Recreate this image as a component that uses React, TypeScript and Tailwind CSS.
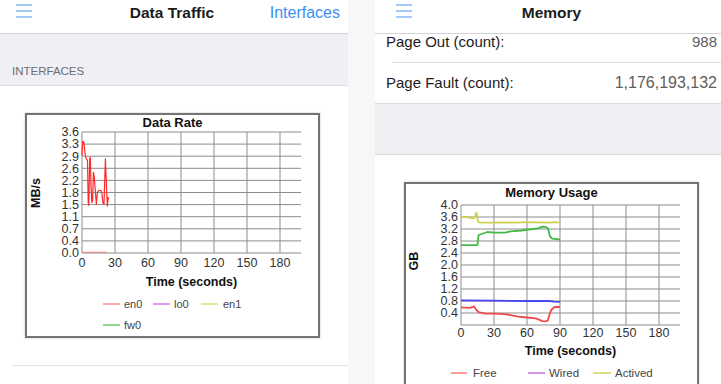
type Pt = [number, number];

const FONT = '"Liberation Sans", Arial, sans-serif';

// t seconds -> x, value -> y
function line(data: Pt[], x0: number, y0: number, ys: number) {
  return data.map(([t, v]) => `${(x0 + t * 1.1).toFixed(1)},${(y0 - v * ys).toFixed(1)}`).join(' ');
}

const en0: Pt[] = [
  [0, 2.9], [0.6, 3.32], [1.6, 3.3], [3, 2.9], [4, 2.8], [5, 2.75], [5.6, 1.5], [6.2, 1.42],
  [7, 2.8], [7.5, 2.85], [8.2, 2.0], [9, 1.5], [9.6, 1.55], [10.4, 2.4], [11, 2.3], [12, 1.9],
  [13, 1.45], [14, 1.8], [15, 1.86], [17, 1.86], [18, 1.8], [19, 1.5], [20, 1.45], [21.3, 2.8],
  [22, 2.2], [23, 1.4], [23.8, 1.65], [24.4, 1.6],
];

const actived: Pt[] = [
  [0, 3.6], [5, 3.6], [8, 3.58], [10, 3.55], [12, 3.57], [14, 3.75], [15, 3.55], [16, 3.42],
  [20, 3.41], [30, 3.41], [40, 3.42], [50, 3.41], [60, 3.43], [70, 3.42], [80, 3.41], [85, 3.43], [90, 3.41],
];
const green: Pt[] = [
  [0, 2.66], [14, 2.66], [15, 2.67], [16, 3.0], [20, 3.05], [24, 3.1], [30, 3.08], [40, 3.08],
  [45, 3.12], [55, 3.15], [65, 3.2], [70, 3.22], [74, 3.28], [77, 3.27], [79, 3.22], [81, 2.95],
  [83, 2.88], [90, 2.85],
];
const wired: Pt[] = [[0, 0.82], [30, 0.81], [60, 0.8], [80, 0.8], [85, 0.78], [90, 0.77]];
const free: Pt[] = [
  [0, 0.59], [8, 0.57], [12, 0.62], [14, 0.5], [16, 0.43], [22, 0.38], [30, 0.38], [40, 0.36],
  [45, 0.33], [52, 0.28], [60, 0.25], [68, 0.22], [72, 0.16], [74, 0.13], [77, 0.12], [79, 0.15],
  [80, 0.3], [82, 0.5], [85, 0.6], [90, 0.6],
];

const xTicks = [0, 30, 60, 90, 120, 150, 180];

function Hamburger() {
  return (
    <svg width="16" height="14" viewBox="0 0 16 14" className="mt-[4px]">
      <g stroke="#74b0f4" strokeWidth="1.3">
        <line x1="0" y1="1" x2="16" y2="1" />
        <line x1="0" y1="7" x2="16" y2="7" />
        <line x1="0" y1="13" x2="16" y2="13" />
      </g>
    </svg>
  );
}

function DataRateChart() {
  const top = 132;
  const step = 12.1;
  const labels = ['3.6', '3.3', '2.9', '2.6', '2.2', '1.8', '1.5', '1.1', '0.7', '0.4', '0.0'];
  return (
    <div className="ml-[25px] mt-[27px] w-[295px] h-[225px] border-2 border-[#737373] shadow-[0_0_2px_rgba(0,0,0,0.25)]">
      <svg width="291" height="221" viewBox="27 115 291 221" fontFamily={FONT}>
        <g stroke="#8c8c8c" strokeWidth="1">
          {labels.map((_, i) => (
            <line key={i} x1="82" x2="301" y1={top + i * step} y2={top + i * step} />
          ))}
          {xTicks.map((t, i) => (
            <line key={t} x1={82 + i * 33} x2={82 + i * 33} y1={top} y2={253} />
          ))}
        </g>
        <g fontSize="12" fill="#333" textAnchor="end">
          {labels.map((l, i) => (
            <text key={l} x="79" y={top + i * step + 4.3} textLength="17.5" lengthAdjust="spacingAndGlyphs">{l}</text>
          ))}
        </g>
        <g fontSize="12.5" fill="#333" textAnchor="middle">
          {xTicks.map((t, i) => (
            <text key={t} x={82 + i * 33} y="267">{t}</text>
          ))}
        </g>
        <text x="172.5" y="127" fontSize="13" fontWeight="bold" textAnchor="middle" fill="#111">Data Rate</text>
        <text x="191.5" y="286" fontSize="12.5" fontWeight="bold" textAnchor="middle" fill="#111">Time (seconds)</text>
        <text transform="translate(39.5,193) rotate(-90)" fontSize="12.5" fontWeight="bold" textAnchor="middle" fill="#111">MB/s</text>
        <line x1="82" x2="107" y1="252.3" y2="252.3" stroke="#f08080" strokeWidth="1" />
        <polyline points={line(en0, 82, 253, 33.6)} fill="none" stroke="#ff2a2a" strokeWidth="1.2" strokeLinejoin="round" />
        <g fontSize="11" fill="#444">
          <line x1="103" x2="120" y1="304" y2="304" stroke="#ff8a8a" strokeWidth="1.5" />
          <text x="124" y="308">en0</text>
          <line x1="153" x2="170" y1="304" y2="304" stroke="#d77be0" strokeWidth="1.5" />
          <text x="174" y="308">lo0</text>
          <line x1="201" x2="218" y1="304" y2="304" stroke="#dede70" strokeWidth="1.5" />
          <text x="223" y="308">en1</text>
          <line x1="103" x2="120" y1="325" y2="325" stroke="#6cc86c" strokeWidth="1.5" />
          <text x="124" y="329">fw0</text>
        </g>
      </svg>
    </div>
  );
}

function MemoryChart() {
  const top = 204;
  const step = 12;
  const labels = ['4.0', '3.6', '3.2', '2.8', '2.4', '2.0', '1.6', '1.2', '0.8', '0.4'];
  return (
    <div className="ml-[29px] mt-[27px] w-[295px] h-[215px] shrink-0 border-2 border-[#737373] shadow-[0_0_2px_rgba(0,0,0,0.25)]">
      <svg width="291" height="211" viewBox="406 183 291 211" fontFamily={FONT}>
        <g stroke="#8c8c8c" strokeWidth="1">
          {Array.from({ length: 11 }).map((_, i) => (
            <line key={i} x1="461" x2="680" y1={top + i * step} y2={top + i * step} />
          ))}
          {xTicks.map((t, i) => (
            <line key={t} x1={461 + i * 33} x2={461 + i * 33} y1={top} y2={324} />
          ))}
        </g>
        <g fontSize="12" fill="#333" textAnchor="end">
          {labels.map((l, i) => (
            <text key={l} x="458" y={top + i * step + 4.3} textLength="17.5" lengthAdjust="spacingAndGlyphs">{l}</text>
          ))}
        </g>
        <g fontSize="12.5" fill="#333" textAnchor="middle">
          {xTicks.map((t, i) => (
            <text key={t} x={461 + i * 33} y="336">{t}</text>
          ))}
        </g>
        <text x="551.5" y="195.5" fontSize="13" fontWeight="bold" textAnchor="middle" fill="#111">Memory Usage</text>
        <text x="570.5" y="353.5" fontSize="12.5" fontWeight="bold" textAnchor="middle" fill="#111">Time (seconds)</text>
        <text transform="translate(417.5,260) rotate(-90)" fontSize="12.5" fontWeight="bold" textAnchor="middle" fill="#111">GB</text>
        <g fill="none" strokeWidth="1.8" strokeLinejoin="round">
          <polyline points={line(actived, 461, 324, 30)} stroke="#cfcf55" />
          <polyline points={line(green, 461, 324, 30)} stroke="#45b845" />
          <polyline points={line(wired, 461, 324, 30)} stroke="#4848ee" />
          <polyline points={line(free, 461, 324, 30)} stroke="#f04a4a" />
        </g>
        <g fontSize="11.5" fill="#444">
          <line x1="451" x2="467" y1="372" y2="372" stroke="#ff7a7a" strokeWidth="1.5" />
          <text x="473" y="376">Free</text>
          <line x1="528" x2="545" y1="372" y2="372" stroke="#cc6ee0" strokeWidth="1.5" />
          <text x="549" y="376">Wired</text>
          <line x1="593" x2="611" y1="372" y2="372" stroke="#d4d460" strokeWidth="1.5" />
          <text x="615" y="376">Actived</text>
        </g>
      </svg>
    </div>
  );
}

export default function App() {
  return (
    <div className="w-[721px] h-[384px] overflow-hidden flex bg-[#f7f7f8] font-['Liberation_Sans',Arial,sans-serif]">
      <div className="w-[348px] shrink-0 bg-white flex flex-col">
        <div className="h-[34px] grid grid-cols-[1fr_auto_1fr] items-start pr-[4px] border-b border-[#d4d4d8]">
          <div className="pl-[16px]">
            <Hamburger />
          </div>
          <div className="pt-[3px] text-[15.5px] leading-[19px] font-bold text-[#1c1c1c]">Data Traffic</div>
          <div className="pt-[3px] pr-[4px] justify-self-end text-[16px] leading-[19px] text-[#3b8ff0]">Interfaces</div>
        </div>
        <div className="h-[52px] bg-[#efeff4] border-b border-[#dcdce0] flex items-end pl-[12px] pb-[7px]">
          <span className="text-[11.5px] leading-[13px] text-[#6d6d72]">INTERFACES</span>
        </div>
        <DataRateChart />
        <div className="mt-[27px] ml-[12px] h-px bg-[#e2e2e4]" />
      </div>

      <div className="w-[27px] shrink-0" />

      <div className="flex-1 bg-white flex flex-col">
        <div className="h-[34px] shrink-0 grid grid-cols-[1fr_auto_1fr] items-start pl-[7px] border-b border-[#d4d4d8]">
          <div className="pl-[14px]">
            <Hamburger />
          </div>
          <div className="pt-[3px] text-[15.5px] leading-[19px] font-bold text-[#1c1c1c]">Memory</div>
          <div />
        </div>
        <div className="h-[28px] shrink-0 flex justify-between items-start pl-[11px] pr-[4px] text-[15px] leading-[16px]">
          <span className="text-[#1c1c1c]">Page Out (count):</span>
          <span className="text-[#5e5e5e]">988</span>
        </div>
        <div className="ml-[17px] h-px shrink-0 bg-[#dcdcde]" />
        <div className="h-[41px] shrink-0 flex justify-between items-center pl-[11px] pr-[4px] text-[15px] border-b border-[#dcdce0]">
          <span className="text-[#1c1c1c]">Page Fault (count):</span>
          <span className="text-[16px] text-[#5e5e5e]">1,176,193,132</span>
        </div>
        <div className="h-[51px] shrink-0 bg-[#efeff4] border-b border-[#dcdce0]" />
        <MemoryChart />
      </div>
    </div>
  );
}
